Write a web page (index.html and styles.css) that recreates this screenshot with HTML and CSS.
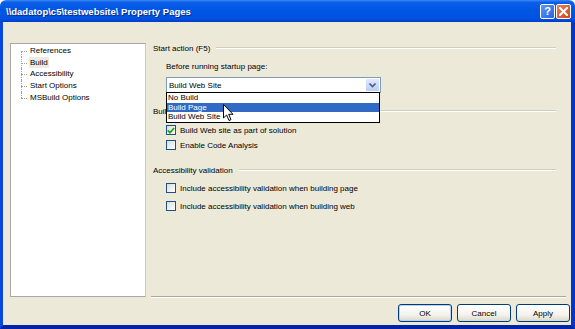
FILE: index.html
```html
<!DOCTYPE html>
<html lang="en">
<head>
    <meta charset="UTF-8">
    <title>Property Pages</title>
    <link rel="stylesheet" href="styles.css">
</head>
<body>
    <div class="window">
        <!-- Title bar -->
        <div class="titlebar">
            <span class="title">\\dadatop\c5\testwebsite\ Property Pages</span>
            <div class="caption-btns">
                <span class="cap-btn help">?</span>
                <span class="cap-btn close">
                    <svg width="9" height="9" viewBox="0 0 9 9"><path d="M1 1 L8 8 M8 1 L1 8" stroke="#fff" stroke-width="2" stroke-linecap="square"/></svg>
                </span>
            </div>
        </div>

        <div class="client">
            <div class="main">
                <!-- Left navigation tree -->
                <div class="tree">
                    <ul class="tree-list">
                        <li><span>References</span></li>
                        <li class="selected"><span>Build</span></li>
                        <li><span>Accessibility</span></li>
                        <li><span>Start Options</span></li>
                        <li class="last"><span>MSBuild Options</span></li>
                    </ul>
                </div>

                <!-- Settings pane -->
                <div class="pane">
                    <div class="group-head"><span>Start action (F5)</span></div>
                    <div class="field-label">Before running startup page:</div>
                    <div class="combo">
                        <div class="combo-box">
                            <span class="combo-text">Build Web Site</span>
                            <span class="combo-btn">
                                <svg width="7" height="5" viewBox="0 0 7 5"><path d="M0.5 0.5 L3.5 3.5 L6.5 0.5" fill="none" stroke="#4D6185" stroke-width="1.6"/></svg>
                            </span>
                        </div>
                        <ul class="dropdown">
                            <li>No Build</li>
                            <li class="hl">Build Page</li>
                            <li>Build Web Site</li>
                        </ul>
                        <svg class="cursor" width="12" height="18" viewBox="0 0 12 18">
                            <path d="M0.5 0.5 L0.5 14 L3.6 11 L6 16.5 L8 15.6 L5.7 10.3 L10 10.3 Z" fill="#fff" stroke="#000" stroke-width="1"/>
                        </svg>
                    </div>

                    <div class="group-head build-head"><span>Build</span></div>
                    <label class="check first"><span class="box checked"><svg width="8" height="7" viewBox="0 0 8 7"><path d="M0.8 3.3 L3 5.6 L7.2 1" fill="none" stroke="#21A121" stroke-width="1.8"/></svg></span>Build Web site as part of solution</label>
                    <label class="check"><span class="box"></span>Enable Code Analysis</label>

                    <div class="group-head access-head"><span>Accessibility validation</span></div>
                    <label class="check first"><span class="box"></span>Include accessibility validation when building page</label>
                    <label class="check wide"><span class="box"></span>Include accessibility validation when building web</label>
                </div>
            </div>

            <!-- Dialog buttons -->
            <div class="buttons">
                <button class="btn btn-default">OK</button>
                <button class="btn">Cancel</button>
                <button class="btn">Apply</button>
            </div>
        </div>
    </div>
</body>
</html>
```

FILE: styles.css
```css
body {
    margin: 0;
    font-family: "Liberation Sans", Arial, sans-serif;
    font-size: 8px;
    color: #000;
    background-color: #fff;
}
.window {
    width: 575px;
    height: 329px;
    display: flex;
    flex-direction: column;
    overflow: hidden;
}
.titlebar {
    height: 22px;
    flex: none;
    display: flex;
    align-items: center;
    justify-content: space-between;
    padding: 0 4px 0 6px;
    background: linear-gradient(to bottom, #3A8CF8 0%, #0D5FE8 10%, #0056E4 45%, #0052E0 85%, #003CCB 100%);
    border-radius: 6px 6px 0 0;
}
.title {
    color: #fff;
    font-weight: bold;
    font-size: 9.5px;
    text-shadow: 1px 1px 0 #0A2B8A;
}
.caption-btns {
    display: flex;
    gap: 1px;
}
.cap-btn {
    width: 13px;
    height: 13px;
    border: 1px solid #fff;
    border-radius: 2px;
    display: flex;
    align-items: center;
    justify-content: center;
    color: #fff;
    font-weight: bold;
    font-size: 11px;
}
.help {
    background: linear-gradient(135deg, #5F95F5, #2664E0);
}
.close {
    background: linear-gradient(135deg, #E8805E, #D24517);
}
.client {
    flex: 1;
    display: flex;
    flex-direction: column;
    background-color: #ECE9D8;
    border-left: 3px solid #0A48DC;
    border-right: 4px solid #0535C8;
    border-bottom: 4px solid #0024A8;
}
.main {
    display: flex;
    padding: 21px 5px 0 7px;
    height: 254px;
}
.tree {
    width: 134px;
    background: #fff;
    border: 1px solid #A8A8A8;
    border-right-color: #C8C8C8;
}
.tree-list {
    list-style: none;
    margin: 0;
    padding: 1px 0 0 0;
}
.tree-list li {
    position: relative;
    height: 11.7px;
    line-height: 11.7px;
    padding-left: 18px;
}
.tree-list li::before {
    content: "";
    position: absolute;
    left: 10px;
    top: 6px;
    width: 6px;
    border-top: 1px dotted #A0A0A0;
}
.tree-list li::after {
    content: "";
    position: absolute;
    left: 10px;
    top: 0;
    height: 100%;
    border-left: 1px dotted #A0A0A0;
}
.tree-list li:first-child::after {
    top: 6px;
    height: 6px;
}
.tree-list li.last::after {
    height: 6px;
}
.tree-list li span {
    padding: 1px 1px;
}
.tree-list li.selected span {
    background-color: #ECEAE2;
}
.pane {
    flex: 1;
    margin-left: 5px;
    padding: 0 10px 0 2px;
    border-bottom: 1px solid #ACA899;
    box-shadow: 0 1px 0 #fff;
}
.group-head {
    display: flex;
    align-items: center;
    height: 10px;
    gap: 6px;
}
.group-head::after {
    content: "";
    flex: 1;
    border-top: 1px solid #D0CDBC;
    border-bottom: 1px solid #fff;
}
.field-label {
    margin: 9px 0 0 13px;
    height: 10px;
    line-height: 10px;
}
.combo {
    position: relative;
    margin: 5px 0 0 13px;
    width: 215px;
}
.combo-box {
    height: 14px;
    border: 1px solid #7F9DB9;
    background: #fff;
    display: flex;
    align-items: center;
    justify-content: space-between;
    padding-left: 2px;
}
.combo-btn {
    width: 13px;
    height: 12px;
    margin-right: 1px;
    background: linear-gradient(to bottom, #E0E9FC, #B9CDF6);
    border-radius: 1px;
    display: flex;
    align-items: center;
    justify-content: center;
}
.dropdown {
    position: absolute;
    top: 15px;
    left: 0;
    width: 212px;
    margin: 0;
    padding: 0;
    list-style: none;
    background: #fff;
    border: 1px solid #000;
}
.dropdown li {
    height: 9.5px;
    line-height: 9.5px;
    padding-left: 1px;
}
.dropdown li.hl {
    background: #316AC5;
    color: #fff;
}
.cursor {
    position: absolute;
    left: 57px;
    top: 27px;
}
.build-head {
    margin-top: 13px;
}
.access-head {
    margin-top: 15px;
}
.check {
    display: flex;
    align-items: center;
    gap: 4px;
    height: 10px;
    margin: 5px 0 0 13px;
}
.check.first {
    margin-top: 9px;
}
.check.wide {
    margin-top: 8px;
}
.access-head + .check.first {
    margin-top: 8px;
}
.box {
    width: 8px;
    height: 8px;
    border: 1px solid #1C5180;
    background: linear-gradient(135deg, #DCDCD7, #fff);
    display: flex;
    align-items: center;
    justify-content: center;
}
.buttons {
    display: flex;
    justify-content: flex-end;
    gap: 5px;
    padding: 7px 1px 0 0;
}
.btn {
    width: 54px;
    height: 18px;
    font-family: "Liberation Sans", Arial, sans-serif;
    font-size: 8px;
    border: 1px solid #003C74;
    border-radius: 3px;
    background: linear-gradient(to bottom, #FFFFFF 0%, #F4F3EE 60%, #DCD8C8 100%);
    padding: 0;
}
.btn-default {
    box-shadow: inset 0 0 0 1px #B9D1F5;
}
```
